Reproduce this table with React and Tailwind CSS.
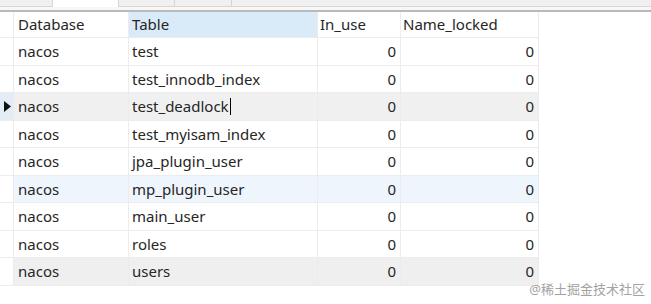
const rows = [
  { table: "test", bg: "bg-white" },
  { table: "test_innodb_index", bg: "bg-white" },
  { table: "test_deadlock", bg: "bg-[#f0f0f0]", current: true },
  { table: "test_myisam_index", bg: "bg-white" },
  { table: "jpa_plugin_user", bg: "bg-white" },
  { table: "mp_plugin_user", bg: "bg-[#eef5fd]" },
  { table: "main_user", bg: "bg-white" },
  { table: "roles", bg: "bg-white" },
  { table: "users", bg: "bg-[#efefef]" },
];

function Cell({ className = "", children }) {
  return (
    <div className={`flex items-center border-r border-b border-[#ececec] ${className}`}>
      {children}
    </div>
  );
}

export default function App() {
  return (
    <div
      className="relative h-[304px] w-[651px] overflow-hidden bg-white text-[15px] text-[#262626]"
      style={{ fontFamily: '"Noto Sans", "Noto Sans CJK SC", sans-serif' }}
    >
      {/* tab strip */}
      <div className="flex h-[7px] bg-[#f0f0f0]">
        <div className="w-[53px] border-r border-b border-[#d6d6d6] bg-[#f0f0f0]" />
        <div className="w-[65px] bg-white" />
        <div className="w-[57px] border-x border-b border-[#d6d6d6] bg-[#f0f0f0]" />
        <div className="w-[57px] border-r border-b border-[#d6d6d6] bg-[#f0f0f0]" />
        <div className="flex-1 border-b border-[#d6d6d6] bg-[#f0f0f0]" />
      </div>
      <div className="h-[3px] bg-[#f7f7f7]" />
      <div className="h-[2px] bg-[#b9b9b9]" />

      {/* grid */}
      <div className="grid w-[539px] grid-cols-[14px_115px_189px_83px_138px] grid-rows-[26px_repeat(9,27.5px)]">
        <Cell className="bg-white" />
        <Cell className="bg-white pl-[4px]">Database</Cell>
        <Cell className="bg-[#d9eaf8] pl-[3px]">Table</Cell>
        <Cell className="bg-white pl-[2px]">In_use</Cell>
        <Cell className="bg-white pl-[2px]">Name_locked</Cell>

        {rows.map((r) => (
          <div key={r.table} className="contents">
            <Cell className={`${r.current ? "bg-[#e4ecf5]" : "bg-white"} justify-center`}>
              {r.current && (
                <svg width="7" height="11" viewBox="0 0 7 11" className="ml-[1px]">
                  <path d="M0 0 L7 5.5 L0 11 Z" fill="#111" />
                </svg>
              )}
            </Cell>
            <Cell className={`${r.bg} pl-[4px]`}>nacos</Cell>
            <Cell className={`${r.bg} pl-[3px]`}>
              {r.table}
              {r.current && <span className="ml-[1px] inline-block h-[17px] w-[1px] bg-black" />}
            </Cell>
            <Cell className={`${r.bg} justify-end pr-[4px]`}>0</Cell>
            <Cell className={`${r.bg} justify-end pr-[4px]`}>0</Cell>
          </div>
        ))}
      </div>

      <div className="absolute bottom-[5px] right-[6px] text-[13px] text-[#a3a3a3]">
        @稀土掘金技术社区
      </div>
    </div>
  );
}
